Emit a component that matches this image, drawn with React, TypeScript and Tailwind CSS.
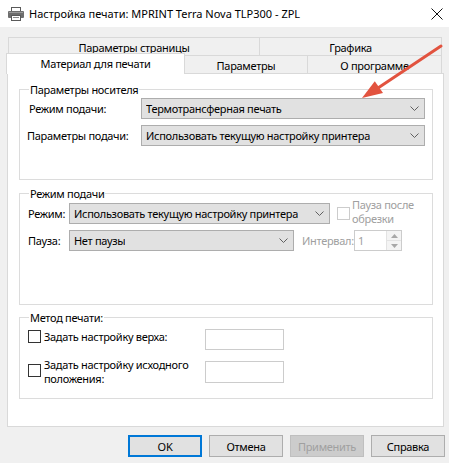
import React from 'react';

// small "v" used on the right side of the drop-down lists
function Chevron() {
  return (
    <svg width="9" height="5" viewBox="0 0 9 5" className="shrink-0">
      <path d="M0.5 0.5 L4.5 4.5 L8.5 0.5" stroke="#606060" strokeWidth="1" fill="none" />
    </svg>
  );
}

function Combo({ value, className }: { value: string; className: string }) {
  return (
    <div
      className={`${className} h-[21px] flex items-center justify-between border border-[#adadad] bg-[#e1e1e1] pl-[4px] pr-[5px] shrink-0`}
    >
      <span className="truncate">{value}</span>
      <Chevron />
    </div>
  );
}

function Group({ title, className, children }: { title: string; className: string; children?: React.ReactNode }) {
  return (
    <div className={`${className} w-[414px] border border-[#dcdcdc] flex flex-col`}>
      <span className="block w-fit -mt-[8px] ml-[9px] px-[1px] bg-white leading-[15px]">{title}</span>
      {children}
    </div>
  );
}

function Button({ label, kind }: { label: string; kind?: 'default' | 'disabled' }) {
  const cls =
    kind === 'default'
      ? 'border-2 border-[#0078d7] bg-[#e1e1e1] text-black'
      : kind === 'disabled'
        ? 'border border-[#bfbfbf] bg-[#cccccc] text-[#a0a0a0]'
        : 'border border-[#adadad] bg-[#e1e1e1] text-black';
  return <div className={`w-[74px] h-[22px] flex items-center justify-center ${cls}`}>{label}</div>;
}

function PrinterIcon() {
  return (
    <svg width="16" height="14" viewBox="0 0 16 14">
      <rect x="3.5" y="0.5" width="9" height="4" fill="#ffffff" stroke="#5a5a5a" />
      <rect x="0" y="4" width="16" height="7" rx="1" fill="#6e6e6e" />
      <rect x="1" y="5" width="14" height="1" fill="#9a9a9a" />
      <rect x="3.5" y="8.5" width="9" height="5" fill="#ffffff" stroke="#5a5a5a" />
      <rect x="5" y="10" width="6" height="1" fill="#8a8a8a" />
    </svg>
  );
}

export default function App() {
  return (
    <div className="relative w-[449px] h-[463px] overflow-hidden bg-[#f0f0f0] text-[11px] tracking-[-0.3px] text-black font-['Noto_Sans',sans-serif] leading-[15px]">
      {/* title bar */}
      <div className="h-[27px] bg-white flex items-center pl-[8px] pr-[6px]">
        <PrinterIcon />
        <span className="ml-[5px] tracking-normal">Настройка печати: MPRINT Terra Nova TLP300 - ZPL</span>
        <svg width="12" height="12" viewBox="0 0 12 12" className="ml-auto">
          <path d="M0.5 0.5 L11.5 11.5 M11.5 0.5 L0.5 11.5" stroke="#111" strokeWidth="1" />
        </svg>
      </div>

      {/* tabs */}
      <div className="pt-[10px]">
        <div className="flex h-[18px] ml-[8px]">
          <div className="w-[252px] border-t border-l border-r border-[#d9d9d9] flex items-center justify-center pt-[2px]">
            Параметры страницы
          </div>
          <div className="w-[182px] border-t border-r border-[#d9d9d9] flex items-center justify-center pt-[2px]">
            Графика
          </div>
        </div>
        <div className="flex h-[18px] ml-[6px]">
          <div className="relative z-10 -mt-[2px] w-[179px] h-[21px] bg-white border-t border-l border-r border-[#d9d9d9] flex items-start justify-center pt-[2px]">
            Материал для печати
          </div>
          <div className="w-[123px] border-t border-r border-[#d9d9d9] flex items-center justify-center pt-[2px]">
            Параметры
          </div>
          <div className="w-[134px] border-t border-r border-[#d9d9d9] flex items-center justify-center pt-[2px]">
            О программе
          </div>
        </div>

        {/* tab page */}
        <div className="ml-[7px] w-[437px] h-[354px] bg-white border border-[#d9d9d9] pt-[15px] pl-[11px]">
          <Group title="Параметры носителя" className="h-[91px]">
            <div className="flex items-center mt-[1px]">
              <span className="ml-[9px] w-[112px] whitespace-nowrap">Режим подачи:</span>
              <Combo value="Термотрансферная печать" className="w-[284px]" />
            </div>
            <div className="flex items-center mt-[6px]">
              <span className="ml-[7px] w-[114px] whitespace-nowrap">Параметры подачи:</span>
              <Combo value="Использовать текущую настройку принтера" className="w-[284px]" />
            </div>
          </Group>

          <Group title="Режим подачи" className="h-[112px] mt-[13px]">
            <div className="flex items-center mt-[2px]">
              <span className="ml-[8px] w-[41px]">Режим:</span>
              <Combo value="Использовать текущую настройку принтера" className="w-[261px]" />
              <div className="h-[21px] flex items-center ml-[7px]">
                <div className="w-[13px] h-[13px] border border-[#cccccc] bg-white shrink-0" />
                <span className="ml-[2px] -mt-[3px] leading-[14px] text-[#a0a0a0] whitespace-nowrap">
                  Пауза после
                  <br />
                  обрезки
                </span>
              </div>
            </div>
            <div className="flex items-center mt-[6px]">
              <span className="ml-[8px] w-[41px]">Пауза:</span>
              <Combo value="Нет паузы" className="w-[225px]" />
              <span className="ml-[8px] w-[52px] text-[#a0a0a0] whitespace-nowrap">Интервал:</span>
              <div className="w-[48px] h-[21px] border border-[#cccccc] bg-white flex items-center">
                <span className="pl-[3px] text-[#a0a0a0] flex-1">1</span>
                <div className="w-[15px] h-full flex flex-col border-l border-[#e3e3e3]">
                  <div className="flex-1 flex items-center justify-center bg-[#f4f4f4] border-b border-[#e3e3e3]">
                    <svg width="7" height="4" viewBox="0 0 7 4">
                      <path d="M0 4 L3.5 0 L7 4 Z" fill="#a8a8a8" />
                    </svg>
                  </div>
                  <div className="flex-1 flex items-center justify-center bg-[#f4f4f4]">
                    <svg width="7" height="4" viewBox="0 0 7 4">
                      <path d="M0 0 L3.5 4 L7 0 Z" fill="#a8a8a8" />
                    </svg>
                  </div>
                </div>
              </div>
            </div>
          </Group>

          <Group title="Метод печати:" className="h-[82px] mt-[12px]">
            <div className="flex items-start mt-[4px]">
              <div className="ml-[8px] mt-[1px] w-[13px] h-[13px] border border-[#333333] bg-white shrink-0" />
              <span className="ml-[3px] w-[161px] leading-[14px] pt-[1px] whitespace-nowrap">Задать настройку верха:</span>
              <div className="w-[79px] h-[21px] border border-[#cccccc] bg-white" />
            </div>
            <div className="flex items-start mt-[11px]">
              <div className="ml-[8px] mt-[3px] w-[13px] h-[13px] border border-[#333333] bg-white shrink-0" />
              <span className="ml-[3px] w-[161px] leading-[14px] -mt-[3px] whitespace-nowrap">
                Задать настройку исходного
                <br />
                положения:
              </span>
              <div className="w-[79px] h-[22px] border border-[#cccccc] bg-white" />
            </div>
          </Group>
        </div>
      </div>

      {/* dialog buttons */}
      <div className="flex gap-[7px] pl-[128px] mt-[8px]">
        <Button label="OK" kind="default" />
        <Button label="Отмена" />
        <Button label="Применить" kind="disabled" />
        <Button label="Справка" />
      </div>

      {/* red pointer arrow drawn over the dialog */}
      <svg className="absolute inset-0 pointer-events-none" width="449" height="463" viewBox="0 0 449 463">
        <line x1="441" y1="46" x2="378" y2="88" stroke="#e2533f" strokeWidth="3" strokeLinecap="round" />
        <polygon points="362,98 374.8,81.2 383,93" fill="#e2533f" />
      </svg>
    </div>
  );
}
